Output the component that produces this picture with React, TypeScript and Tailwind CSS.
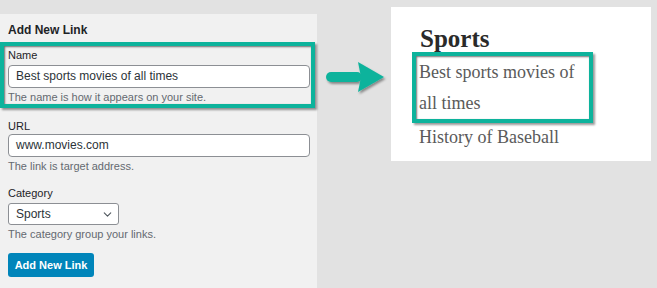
import React from 'react';
import { ChevronDown } from 'lucide-react';

const sans = "font-['Liberation_Sans',Arial,sans-serif]";
const serif = "font-['Liberation_Serif','Times_New_Roman',serif]";

// teal annotation frame used on both sides
const frame =
  'border-[4px] border-[#0db39c] shadow-[inset_1px_1px_2px_rgba(0,0,0,0.55),2px_2px_2px_rgba(0,0,0,0.4)]';

function TextInput({ value }: { value: string }) {
  return (
    <div className="h-[23px] w-[302px] rounded-[4px] border border-[#8c8f94] bg-white px-[7px] text-[12px] leading-[21px] text-[#2c3338]">
      {value}
    </div>
  );
}

function Arrow() {
  return (
    <svg width="74" height="45" viewBox="0 0 74 45" className="mt-[55px]">
      <defs>
        <filter id="arrowShadow" x="-20%" y="-30%" width="140%" height="160%">
          <feDropShadow dx="1.5" dy="2" stdDeviation="1.2" floodColor="#000" floodOpacity="0.4" />
        </filter>
      </defs>
      <g fill="#0db39c" filter="url(#arrowShadow)">
        <rect x="9" y="17" width="36" height="10" rx="5" />
        <path d="M41 7 L67 22 L41 37 L44 22 Z" />
      </g>
    </svg>
  );
}

export default function App() {
  return (
    <div className="flex h-[288px] w-[657px] overflow-hidden bg-[#e2e2e2]">
      {/* Left: admin form */}
      <div className={`mt-[14px] w-[317px] shrink-0 bg-[#f1f1f1] ${sans}`}>
        <div className="ml-2 mt-[8px] text-[12px] font-bold leading-[16px] text-[#1d2327]">Add New Link</div>

        <div className={`mt-[4px] w-[315px] pl-[4px] pt-[2px] ${frame}`}>
          <div className="text-[11px] leading-[14px] text-[#1d2327]">Name</div>
          <div className="mt-[3px]">
            <div className="h-[23px] w-[302px] rounded-[4px] border border-[#8c8f94] bg-white px-[7px] text-[12px] leading-[21px] text-[#2c3338]">
              Best sports movies of all times
            </div>
          </div>
          <div className="mt-[3px] text-[11px] leading-[13px] text-[#646970]">The name is how it appears on your site.</div>
        </div>

        <div className="ml-2">
          <div className="mt-[11px] text-[11px] leading-[14px] text-[#1d2327]">URL</div>
          <div className="mt-[1px]">
            <TextInput value="www.movies.com" />
          </div>
          <div className="mt-[2px] text-[11px] leading-[14px] text-[#646970]">The link is target address.</div>

          <div className="mt-[13px] text-[11px] leading-[14px] text-[#1d2327]">Category</div>
          <div className="mt-[3px] flex h-[22px] w-[111px] items-center justify-between rounded-[3px] border border-[#8c8f94] bg-white pl-[7px] pr-[4px] text-[12px] text-[#2c3338]">
            <span>Sports</span>
            <ChevronDown size={13} strokeWidth={2} className="text-[#50575e]" />
          </div>
          <div className="mt-[2px] text-[11px] leading-[14px] text-[#646970]">The category group your links.</div>

          <button className="mt-[12px] flex h-[24px] w-[86px] items-center justify-center rounded-[3px] bg-[#0085ba] text-[11px] font-bold text-white">
            Add New Link
          </button>
        </div>
      </div>

      {/* Arrow */}
      <div className="flex w-[74px] shrink-0 flex-col">
        <Arrow />
      </div>

      {/* Right: rendered result */}
      <div className={`mt-[7px] h-[154px] w-[260px] shrink-0 bg-white pl-[21px] pt-[18px] ${serif}`}>
        <div className="ml-[8px] text-[25px] font-bold leading-[28px] text-[#2a2a2a]">Sports</div>
        <div className={`-mt-[1px] w-[181px] pl-[3px] pt-[1px] ${frame}`}>
          <div className="text-[18px] leading-[31px] text-[#5a5a5a]">
            Best sports movies of
            <br />
            all times
          </div>
        </div>
        <div className="ml-[7px] text-[18px] leading-[28px] text-[#5a5a5a]">History of Baseball</div>
      </div>
    </div>
  );
}
